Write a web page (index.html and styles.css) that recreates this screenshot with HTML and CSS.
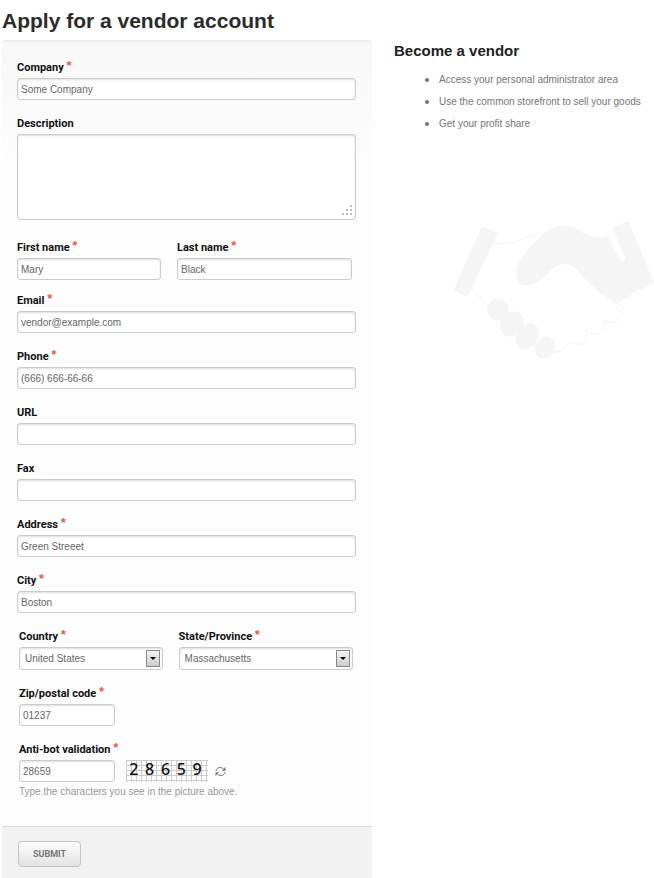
FILE: index.html
```html
<!DOCTYPE html>
<html lang="en">

<head>
    <meta charset="UTF-8">
    <meta name="viewport" content="width=device-width, initial-scale=1.0">
    <title>Apply for a vendor account</title>
    <link rel="stylesheet" href="styles.css">
</head>

<body>
    <h1>Apply for a vendor account</h1>
    <div class="content">
        <form class="panel" action="#" method="post">
            <div class="fields">
                <div class="field">
                    <label for="company">Company <em>*</em></label>
                    <input type="text" id="company" value="Some Company">
                </div>
                <div class="field description">
                    <label for="description">Description</label>
                    <div class="area">
                        <textarea id="description"></textarea>
                        <svg class="grip" width="10" height="10" viewBox="0 0 10 10">
                            <path d="M8 0h2v2h-2zM4 4h2v2h-2zM8 4h2v2h-2zM0 8h2v2h-2zM4 8h2v2h-2zM8 8h2v2h-2z" />
                        </svg>
                    </div>
                </div>
                <div class="names">
                    <div class="field">
                        <label for="firstname">First name <em>*</em></label>
                        <input type="text" id="firstname" value="Mary">
                    </div>
                    <div class="field">
                        <label for="lastname">Last name <em>*</em></label>
                        <input type="text" id="lastname" value="Black">
                    </div>
                </div>
                <div class="field">
                    <label for="email">Email <em>*</em></label>
                    <input type="text" id="email" value="vendor@example.com">
                </div>
                <div class="field">
                    <label for="phone">Phone <em>*</em></label>
                    <input type="text" id="phone" value="(666) 666-66-66">
                </div>
                <div class="field">
                    <label for="url">URL</label>
                    <input type="text" id="url">
                </div>
                <div class="field">
                    <label for="fax">Fax</label>
                    <input type="text" id="fax">
                </div>
                <div class="field">
                    <label for="address">Address <em>*</em></label>
                    <input type="text" id="address" value="Green Streeet">
                </div>
                <div class="field">
                    <label for="city">City <em>*</em></label>
                    <input type="text" id="city" value="Boston">
                </div>

                <div class="region">
                    <div class="places">
                        <div class="field">
                            <label for="country">Country <em>*</em></label>
                            <div class="select">
                                <select id="country">
                                    <option>United States</option>
                                </select>
                                <span class="arrow"></span>
                            </div>
                        </div>
                        <div class="field">
                            <label for="state">State/Province <em>*</em></label>
                            <div class="select">
                                <select id="state">
                                    <option>Massachusetts</option>
                                </select>
                                <span class="arrow"></span>
                            </div>
                        </div>
                    </div>
                    <div class="field">
                        <label for="zip">Zip/postal code <em>*</em></label>
                        <input type="text" id="zip" class="short" value="01237">
                    </div>
                    <div class="field">
                        <label for="captcha">Anti-bot validation <em>*</em></label>
                        <div class="captcha">
                            <input type="text" id="captcha" class="short" value="28659">
                            <div class="code">
                                <span>2</span><span>8</span><span>6</span><span>5</span><span>9</span>
                            </div>
                            <a href="#" class="reload" aria-label="Reload">
                                <svg width="11" height="11" viewBox="0 0 11 11">
                                    <path class="line" d="M1 5C1.300 2.800 3 1.500 5 1.500c1.500 0 2.600.5 3.700 1.700M10 6C9.700 8.200 8 9.500 6 9.500c-1.500 0-2.600-.5-3.700-1.700" />
                                    <path d="M10.500 1v3.700H6.800zM.5 10V6.300h3.700z" />
                                </svg>
                            </a>
                        </div>
                        <p class="hint">Type the characters you see in the picture above.</p>
                    </div>
                </div>
            </div>
            <div class="buttons">
                <button type="submit">SUBMIT</button>
            </div>
        </form>

        <div class="side">
            <h2>Become a vendor</h2>
            <ul>
                <li>Access your personal administrator area</li>
                <li>Use the common storefront to sell your goods</li>
                <li>Get your profit share</li>
            </ul>
            <!-- handshake -->
            <svg class="hands" width="200" height="138" viewBox="43 35 600 414">
                <path d="M126 52L174 72 82 263 43 242z" />
                <path d="M517 57L566 35 643 219 602 244 597 238C578 253 557 270 540 278L526 279C487 256 445 222 423 193C408 172 393 163 373 164C329 169 309 227 261 228C241 228 229 213 229 192C232 145 280 106 314 72C333 56 350 50 371 50C398 50 414 60 431 71C454 85 481 87 503 80L543 156C551 159 560 151 557 143z" />
                <ellipse cx="175" cy="301" rx="32" ry="33" />
                <ellipse cx="217" cy="344" rx="33" ry="40" transform="rotate(38 217 344)" />
                <ellipse cx="263" cy="381" rx="31" ry="41" transform="rotate(32 263 381)" />
                <ellipse cx="316" cy="414" rx="29" ry="34" transform="rotate(30 316 414)" />
                <path class="line" d="M162 99C190 107 220 103 250 88C275 74 292 70 316 72M95 237L145 290M185 330L194 323M231 371L239 378M276 406L289 410M338 428C362 429 376 419 390 398C413 408 437 410 440 387V362C464 382 489 376 493 349V332C523 345 545 335 548 305V291L526 279" />
            </svg>
        </div>
    </div>
</body>

</html>
```

FILE: styles.css
```css
* {
    box-sizing: border-box;
}

body {
    margin: 0;
    padding: 8px 0 0 2px;
    background: #fefefe;
    color: #777;
    font: 10px/16px "Liberation Sans", Arial, sans-serif;
}

h1, h2, ul, p {
    margin: 0;
    padding: 0;
}

h1 {
    color: #2b2b2b;
    font-size: 21px;
    line-height: 26px;
}

.content {
    display: grid;
    grid-template-columns: 37fr 26fr;
    gap: 22px;
    align-items: start;
    margin-top: 6px;
}

.panel {
    min-width: 0;
    border-top: 2px solid #eee;
    border-radius: 4px 4px 0 0;
    background: linear-gradient(#f7f7f7, #fdfdfd 120px);
}

.fields {
    padding: 17px 16px 26px 15px;
}

.field {
    margin-bottom: 15px;
}

label {
    display: block;
    margin-bottom: 1px;
    color: #111;
    font: bold 11px/18px Roboto, Arial, sans-serif;
}

label em {
    color: #e0604c;
    font: bold 13px/1px "Liberation Sans", Arial, sans-serif;
    vertical-align: 1px;
}

input, textarea, select {
    display: block;
    width: 100%;
    height: 22px;
    margin: 0;
    padding: 0 3px;
    border: 1px solid #ccc;
    border-radius: 3px;
    background: #fff;
    box-shadow: inset 0 1px 2px #ddd;
    color: #666;
    font: inherit;
    outline: 0;
}

.description {
    margin-bottom: 19px;
}

.area, .select {
    position: relative;
}

textarea {
    height: 86px;
    resize: none;
}

.grip {
    position: absolute;
    right: 4px;
    bottom: 5px;
    fill: #bbb;
}

.names, .places {
    display: grid;
    grid-template-columns: 144fr 175fr;
    gap: 16px;
}

.names {
    margin-right: 4px;
}

.names .field {
    margin-bottom: 12px;
}

.region {
    margin: 0 3px 0 2px;
}

select {
    height: 23px;
    padding: 0 5px;
    appearance: none;
}

/* old style drop-down button */
.arrow {
    position: absolute;
    top: 3px;
    right: 3px;
    width: 14px;
    height: 17px;
    border: 1px solid #888;
    background: linear-gradient(#f5f5f5, #ccc);
    pointer-events: none;
}

.arrow:after {
    content: "";
    position: absolute;
    top: 6px;
    left: 3px;
    border: 3px solid transparent;
    border-top-color: #000;
    border-bottom: 0;
}

.short {
    width: 96px;
}

.captcha {
    display: flex;
    align-items: center;
}

.code {
    display: flex;
    justify-content: space-around;
    width: 82px;
    height: 22px;
    margin: 0 7px 0 11px;
    padding-right: 3px;
    background: repeating-linear-gradient(90deg, #ccc 0 1px, transparent 1px 5px), repeating-linear-gradient(#ccc 0 1px, #fff 1px 5px);
    color: #111;
    font: 500 16px/19px "Noto Sans", sans-serif;
}

.reload {
    display: flex;
}

.reload svg {
    fill: #777;
}

.reload .line {
    fill: none;
    stroke: #777;
}

.hint {
    margin-top: 2px;
    color: #999;
}

.region > .field:last-child {
    margin-bottom: 0;
}

.buttons {
    padding: 14px 16px 13px;
    border-top: 1px solid #ddd;
    background: #f2f2f2;
}

button {
    display: block;
    height: 26px;
    padding: 0 14px;
    border: 1px solid #c4c4c4;
    border-radius: 4px;
    background: linear-gradient(#fdfdfd, #e2e2e2);
    color: #777;
    font: bold 9px/16px Roboto, Arial, sans-serif;
}

.side {
    min-width: 0;
}

h2 {
    color: #222;
    font-size: 15px;
    line-height: 22px;
}

ul {
    margin-top: 9px;
    padding-left: 45px;
}

li {
    height: 16px;
    margin-bottom: 6px;
    white-space: nowrap;
}

li::marker {
    font-size: 12px;
}

.hands {
    display: block;
    margin: 90px 0 0 auto;
    fill: #f5f5f5;
}

.hands .line {
    fill: none;
    stroke: #f5f5f5;
    stroke-width: 3;
}
```
